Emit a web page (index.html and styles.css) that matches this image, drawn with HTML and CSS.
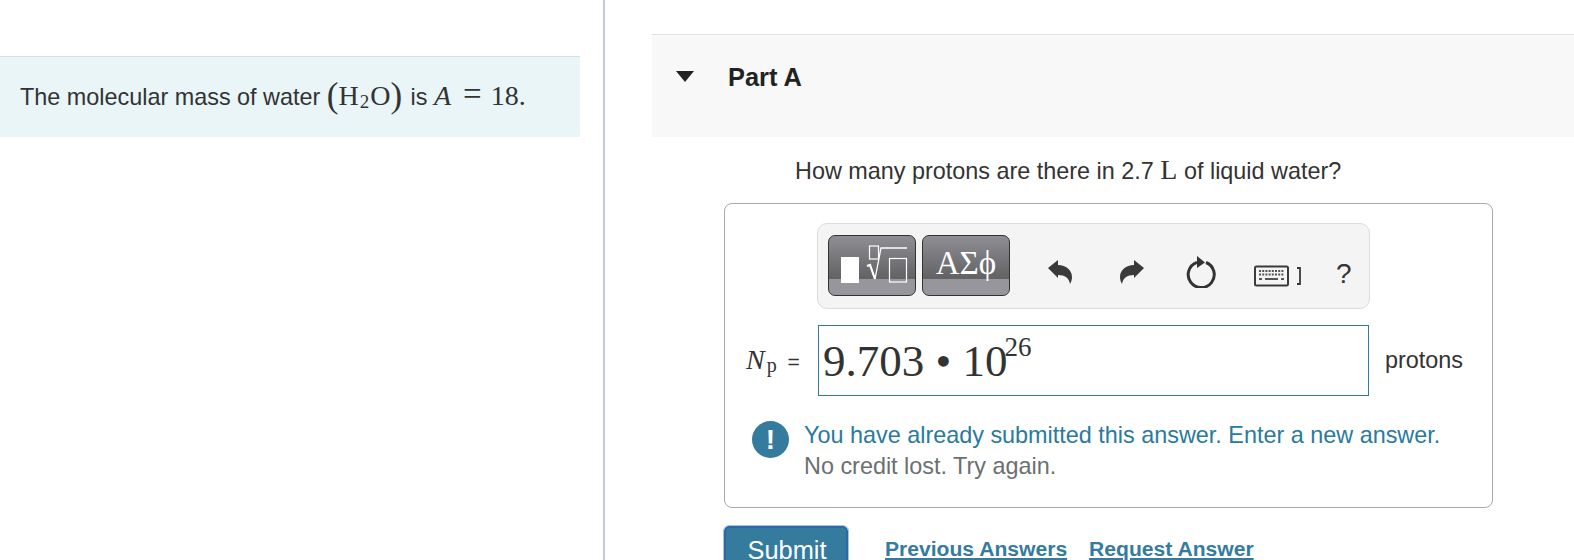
FILE: index.html
```html
<!DOCTYPE html>
<html lang="en">
<head>
    <meta charset="UTF-8">
    <title>Part A</title>
    <link rel="stylesheet" href="styles.css">
</head>
<body>
<div class="page">
    <!-- intro column -->
    <div class="intro-col">
        <div class="intro-box">
            <p>The molecular mass of water <span class="math"><span class="paren">(</span>H<sub>2</sub>O<span class="paren paren-close">)</span></span> is <span class="math"><i>A</i><span class="eq">=</span>18.</span></p>
        </div>
    </div>
    <div class="divider"></div>

    <!-- question column -->
    <div class="part-col">
        <div class="part-header">
            <span class="arrow"></span>
            <h2>Part A</h2>
        </div>
        <p class="question">How many protons are there in 2.7 <span class="math unit">L</span> of liquid water?</p>

        <div class="answer-box">
            <div class="toolbar">
                <div class="tool-btn tool-templates">
                    <svg width="88" height="60" viewBox="0 0 88 60">
                        <rect x="13" y="22" width="18" height="26" fill="#fff"/>
                        <rect x="41.500" y="11" width="9" height="13" fill="none" stroke="#fff" stroke-width="1.200"/>
                        <path d="M39 31l3-1 5 14" fill="none" stroke="#fff" stroke-width="2.200"/>
                        <path d="M47 44l6-31h26" fill="none" stroke="#fff" stroke-width="1.300"/>
                        <rect x="61.500" y="23.500" width="17" height="23.500" fill="none" stroke="#fff" stroke-width="1.200"/>
                    </svg>
                </div>
                <div class="tool-btn tool-symbols">ΑΣϕ</div>
                <svg class="tool-icon icon-undo" width="26" height="28" viewBox="0 0 26 28">
                    <path d="M1 10L11 2v5c8 0 14 5 14 12 0 3-1 5-2 7-1-6-5-9-12-9v3z" fill="#3a3a3a"/>
                </svg>
                <svg class="tool-icon icon-redo" width="26" height="28" viewBox="0 0 26 28">
                    <path d="M25 10L15 2v5C7 7 1 12 1 19c0 3 1 5 2 7 1-6 5-9 12-9v3z" fill="#3a3a3a"/>
                </svg>
                <svg class="tool-icon icon-reset" width="32" height="34" viewBox="0 0 32 34">
                    <path d="M21 8.500a13 13 0 1 1-9-.2" fill="none" stroke="#333" stroke-width="3"/>
                    <path d="M12 2l8 6.500-8 5.500z" fill="#333"/>
                </svg>
                <svg class="tool-icon icon-keyboard" width="50" height="22" viewBox="0 0 50 22">
                    <rect x="1" y="1.500" width="33" height="19" rx="1.500" fill="#f4f4f4" stroke="#3a3a3a" stroke-width="2"/>
                    <path d="M5 6h25M5 9.500h25" stroke="#555" stroke-width="1.800" stroke-dasharray="2 1.200"/>
                    <path d="M5 14h3M11 14h13M27 14h3" stroke="#555" stroke-width="1.800"/>
                    <path d="M43 3h3v16h-3" fill="none" stroke="#3a3a3a" stroke-width="1.800"/>
                </svg>
                <span class="help">?</span>
            </div>

            <div class="answer-row">
                <span class="answer-label"><span class="math"><i>N</i><sub>p</sub></span> =</span>
                <div class="answer-input">9.703 • 10<sup>26</sup></div>
                <span class="answer-unit">protons</span>
            </div>

            <div class="feedback">
                <span class="feedback-icon">!</span>
                <p><span class="feedback-main">You have already submitted this answer. Enter a new answer.</span><br>No credit lost. Try again.</p>
            </div>
        </div>

        <div class="actions">
            <button class="submit-btn">Submit</button>
            <a href="#" class="action-link">Previous Answers</a>
            <a href="#" class="action-link">Request Answer</a>
        </div>
    </div>
</div>
</body>
</html>
```

FILE: styles.css
```css
html, body {
    margin: 0;
    height: 560px;
    overflow: hidden;
    background-color: #fff;
    font-family: "Liberation Sans", Arial, sans-serif;
    color: #333;
}

p, h2 {
    margin: 0;
}

.page {
    display: flex;
    height: 560px;
}

.math {
    font-family: "Liberation Serif", "Times New Roman", serif;
}

/* left column */
.intro-col {
    width: 580px;
    padding-top: 56px;
    flex-shrink: 0;
}

.intro-box {
    height: 81px;
    box-sizing: border-box;
    padding: 0 0 2px 20px;
    border-top: 1px solid #dcdfe2;
    background-color: #e9f5f7;
    display: flex;
    align-items: center;
    font-size: 23.400px;
}

.intro-box .math {
    font-size: 28px;
}

.intro-box sub {
    font-size: 19px;
    line-height: 0;
    margin: 0 1px;
    vertical-align: -3px;
}

.paren {
    font-size: 35px;
    font-weight: normal;
    line-height: 0;
    vertical-align: -2px;
}

.paren-close {
    margin-right: 2px;
}

.eq {
    margin: 0 9px 0 12px;
    font-size: 33px;
    line-height: 0;
}

.divider {
    width: 2px;
    margin-left: 23px;
    background-color: #bccde0;
    flex-shrink: 0;
}

/* right column */
.part-col {
    flex: 1;
    margin-left: 47px;
    padding-top: 34px;
}

.part-header {
    height: 103px;
    box-sizing: border-box;
    border-top: 1px solid #e0e2e4;
    background-color: #f8f8f8;
    display: flex;
    align-items: flex-start;
    padding: 28px 0 0 24px;
}

.arrow {
    width: 0;
    height: 0;
    margin-top: 8px;
    border-left: 9.500px solid transparent;
    border-right: 9.500px solid transparent;
    border-top: 11px solid #222;
}

.part-header h2 {
    margin-left: 34px;
    font-size: 25.400px;
    line-height: 28px;
    font-weight: bold;
    color: #222;
}

.question {
    margin: 20px 0 0 143px;
    font-size: 23.400px;
    line-height: 28px;
}

.unit {
    font-size: 28px;
    line-height: 0;
}

.answer-box {
    width: 769px;
    height: 305px;
    box-sizing: border-box;
    margin: 18px 0 0 72px;
    border: 1px solid #aaa;
    border-radius: 8px;
    padding: 19px 0 0 7px;
}

.toolbar {
    width: 553px;
    height: 86px;
    box-sizing: border-box;
    margin-left: 85px;
    padding: 11px 0 0 10px;
    border: 1px solid #dcdcdc;
    border-radius: 10px;
    background-color: #f4f4f4;
    display: flex;
    align-items: flex-start;
}

.tool-btn {
    height: 61px;
    box-sizing: border-box;
    border: 1px solid #333;
    border-radius: 7px;
    background: linear-gradient(#8e8e94 0%, #626264 72%, #96969c 73%, #96969c 100%);
    color: #fff;
}

.tool-templates {
    width: 88px;
}

.tool-templates svg {
    display: block;
    margin: -1px;
}

.tool-symbols {
    width: 88px;
    margin-left: 6px;
    text-align: center;
    font-family: "Liberation Serif", serif;
    font-size: 33px;
    line-height: 55px;
}

.tool-icon {
    flex-shrink: 0;
}

.icon-undo {
    margin: 23px 0 0 37px;
}

.icon-redo {
    margin: 23px 0 0 46px;
}

.icon-reset {
    margin: 19px 0 0 40px;
}

.icon-keyboard {
    margin: 30px 0 0 37px;
}

.help {
    margin: 22px 0 0 -1px;
    font-size: 28px;
    line-height: 34px;
    padding-left: 33px;
}

.answer-row {
    display: flex;
    align-items: center;
    margin-top: 15px;
    height: 72px;
}

.answer-label {
    width: 86px;
    box-sizing: border-box;
    padding-left: 14px;
    font-size: 21px;
    word-spacing: 5px;
    white-space: nowrap;
}

.answer-label .math {
    font-size: 28px;
}

.answer-label sub {
    margin-left: 2px;
    font-size: 20px;
    line-height: 0;
    vertical-align: -3px;
}

.answer-input {
    width: 551px;
    height: 71px;
    box-sizing: border-box;
    border: 1px solid #2f7a9e;
    padding-left: 4px;
    font-family: "Liberation Serif", serif;
    font-size: 45px;
    line-height: 71px;
}

.answer-input sup {
    margin-left: -3px;
    font-size: 27px;
    line-height: 0;
    vertical-align: 20px;
}

.answer-unit {
    margin-left: 16px;
    font-size: 23.400px;
}

.feedback {
    display: flex;
    margin: 24px 0 0 20px;
    font-size: 23.400px;
    line-height: 31px;
    color: #6c6f70;
}

.feedback-icon {
    width: 37px;
    height: 37px;
    margin-top: 1px;
    border-radius: 50%;
    background-color: #347b9e;
    color: #fff;
    font-weight: bold;
    font-size: 28px;
    line-height: 37px;
    text-align: center;
    flex-shrink: 0;
}

.feedback p {
    margin-left: 15px;
}

.feedback-main {
    color: #2a7a9c;
}

/* bottom buttons */
.actions {
    display: flex;
    align-items: flex-start;
    margin: 18px 0 0 72px;
}

.submit-btn {
    width: 124px;
    height: 46px;
    box-sizing: border-box;
    border: 2px solid #2a68a8;
    outline: 1px solid #a9c4d6;
    border-radius: 5px;
    background-color: #347b9e;
    color: #fff;
    font-family: "Liberation Sans", sans-serif;
    font-size: 25.400px;
    padding: 2px 0 0 2px;
}

.action-link {
    margin: 11px 0 0 22px;
    font-size: 21.100px;
    font-weight: bold;
    color: #347b9e;
}

.submit-btn + .action-link {
    margin-left: 37px;
}
```
